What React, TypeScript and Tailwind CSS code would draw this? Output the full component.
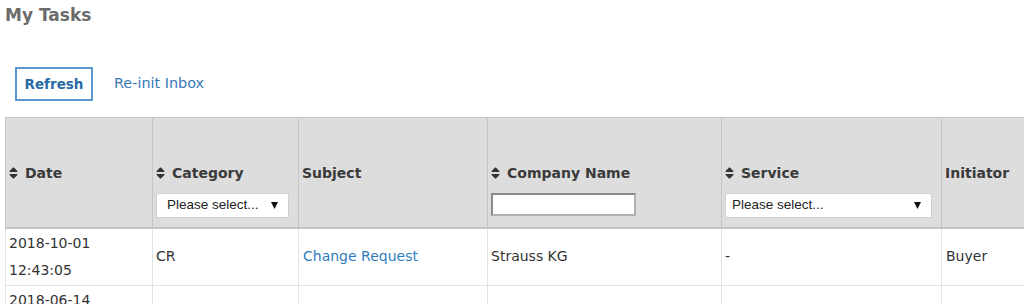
const sans = "font-['DejaVu_Sans','Verdana',sans-serif]";

function SortIcon() {
  return (
    <svg viewBox="0 60 320 392" className="inline-block w-[9px] h-[12px] mr-[7px] align-[-1px] fill-[#333]">
      <path d="M41 288h238c21.4 0 32.1 25.9 17 41L177 448c-9.4 9.4-24.6 9.4-33.9 0L24 329c-15.1-15.1-4.4-41 17-41zm255-105L177 64c-9.4-9.4-24.6-9.4-33.9 0L24 183c-15.1 15.1-4.4 41 17 41h238c21.4 0 32.1-25.9 17-41z" />
    </svg>
  );
}

function FakeSelect({ width, pad }: { width: string; pad: string }) {
  return (
    <div
      className={`${width} ${pad} h-[25px] flex items-center justify-between pr-[10px] bg-white border border-[#cfcfcf] rounded-[2px] font-['Liberation_Sans',Arial,sans-serif] text-[13.5px] font-normal text-[#222]`}
    >
      <span>Please select...</span>
      <svg viewBox="0 0 7 7" className="w-[7px] h-[7px] fill-[#111]">
        <path d="M0 0h7L3.5 7z" />
      </svg>
    </div>
  );
}

function HeaderCell({ title, sort, children }: { title: string; sort?: boolean; children?: React.ReactNode }) {
  return (
    <th className="align-top text-left pt-[42px] px-[3px] pb-0 border-x border-[#c6c6c6] font-bold text-[14px] text-[#3a3a3a]">
      <div className="leading-[26px] whitespace-nowrap">
        {sort && <SortIcon />}
        {title}
      </div>
      <div className="h-[25px] mt-[7px]">{children}</div>
    </th>
  );
}

export default function App() {
  return (
    <div className={`${sans} bg-white min-h-[304px] overflow-hidden text-[#333]`}>
      <h1 className="pl-[5px] pt-[5px] text-[17px] leading-[20px] font-bold text-[#6b6b6b]">My Tasks</h1>

      <div className="flex items-center mt-[42px] ml-[15px] gap-[21px]">
        <button className="w-[78px] h-[34px] border-2 border-[#5b97cf] text-[#2a6aa6] font-bold text-[13.5px]">
          Refresh
        </button>
        <a className="text-[14.4px] text-[#3a78b4]">Re-init Inbox</a>
      </div>

      <table className="mt-[16px] ml-[5px] w-[1030px] table-fixed border-collapse">
        <colgroup>
          <col className="w-[147px]" />
          <col className="w-[146px]" />
          <col className="w-[189px]" />
          <col className="w-[234px]" />
          <col className="w-[220px]" />
          <col className="w-[94px]" />
        </colgroup>
        <thead>
          <tr className="h-[110px] bg-[#dddddd] border-t border-[#c6c6c6] border-b-2 border-b-[#c4c4c4]">
            <HeaderCell title="Date" sort />
            <HeaderCell title="Category" sort>
              <FakeSelect width="w-[133px]" pad="pl-[10px]" />
            </HeaderCell>
            <HeaderCell title="Subject" />
            <HeaderCell title="Company Name" sort>
              <div className="w-[145px] h-[23px] mt-[1px] bg-white border-2 border-[#8a8a8a] border-r-[#b0b0b0] border-b-[#b0b0b0]" />
            </HeaderCell>
            <HeaderCell title="Service" sort>
              <FakeSelect width="w-[207px]" pad="pl-[6px]" />
            </HeaderCell>
            <HeaderCell title="Initiator" />
          </tr>
        </thead>
        <tbody className="text-[14px] leading-[27px]">
          <tr className="border-b border-[#e2e2e2]">
            <td className="px-[3px] py-px border-x border-[#e2e2e2]">
              2018-10-01
              <br />
              12:43:05
            </td>
            <td className="px-[3px] py-px border-x border-[#e2e2e2]">CR</td>
            <td className="px-[4px] py-px border-x border-[#e2e2e2] text-[#2f7bbd]">Change Request</td>
            <td className="px-[3px] py-px border-x border-[#e2e2e2]">Strauss KG</td>
            <td className="px-[3px] py-px border-x border-[#e2e2e2]">-</td>
            <td className="px-[4px] py-px border-x border-[#e2e2e2]">Buyer</td>
          </tr>
          <tr className="border-b border-[#e2e2e2]">
            <td className="px-[3px] py-px border-x border-[#e2e2e2]">
              2018-06-14
              <br />
              09:12:37
            </td>
            <td className="px-[3px] py-px border-x border-[#e2e2e2]">CR</td>
            <td className="px-[4px] py-px border-x border-[#e2e2e2] text-[#2f7bbd]">Change Request</td>
            <td className="px-[3px] py-px border-x border-[#e2e2e2]">Strauss KG</td>
            <td className="px-[3px] py-px border-x border-[#e2e2e2]">-</td>
            <td className="px-[4px] py-px border-x border-[#e2e2e2]">Buyer</td>
          </tr>
        </tbody>
      </table>
    </div>
  );
}
